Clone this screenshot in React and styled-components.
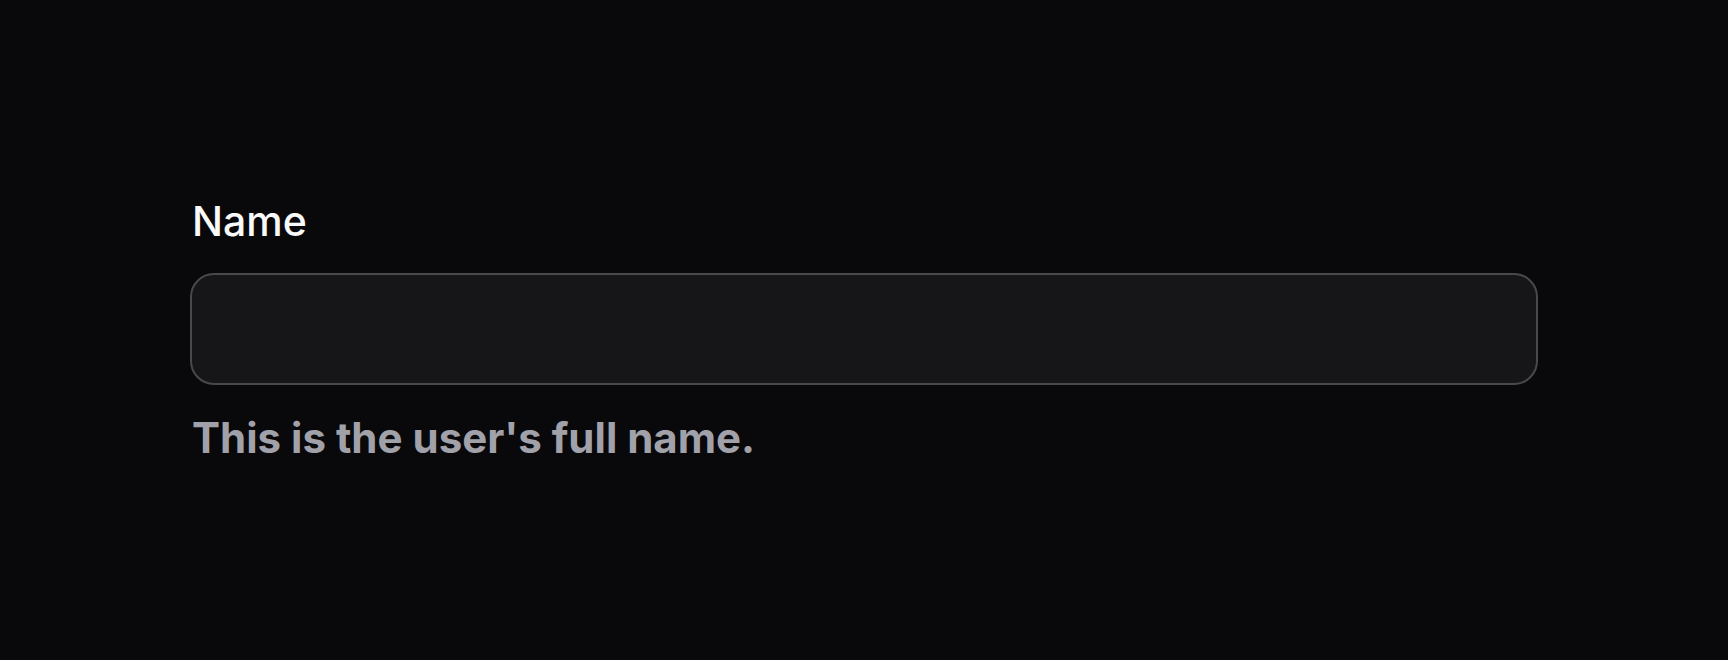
import React, { useState } from 'react'
import styled, { createGlobalStyle } from 'styled-components'

const GlobalStyle = createGlobalStyle`
  html, body {
    margin: 0;
    padding: 0;
    background: #09090b;
  }
  body {
    font-family: Inter, "Noto Sans", "Liberation Sans", sans-serif;
  }
`;

const Page = styled.div`
  min-height: 100vh;
  display: flex;
  flex-direction: column;
  justify-content: center;
  padding: 0 190px;
  box-sizing: border-box;
`;

const Field = styled.div`
  display: flex;
  flex-direction: column;
  gap: 32px;
`;

const Label = styled.label`
  font-size: 41px;
  line-height: 40px;
  font-weight: 500;
  color: #fafafa;
  padding-left: 2px;
`;

const Input = styled.input`
  height: 112px;
  box-sizing: border-box;
  border: 2px solid #48484d;
  border-radius: 24px;
  background: #161618;
  color: #fafafa;
  font-family: inherit;
  font-size: 40px;
  padding: 0 32px;
  outline: none;
`;

const Hint = styled.p`
  margin: 0;
  font-size: 42px;
  line-height: 42px;
  font-weight: 700;
  color: #a1a1aa;
  padding-left: 2px;
`;

const App = () => {
  let [name, setName] = useState('');

  return (
    <Page>
      <GlobalStyle />
      <Field>
        <Label htmlFor="name">Name</Label>
        <Input id="name" value={name} onChange={(e) => setName(e.target.value)} />
        <Hint>This is the user's full name.</Hint>
      </Field>
    </Page>
  )
}

export default App
